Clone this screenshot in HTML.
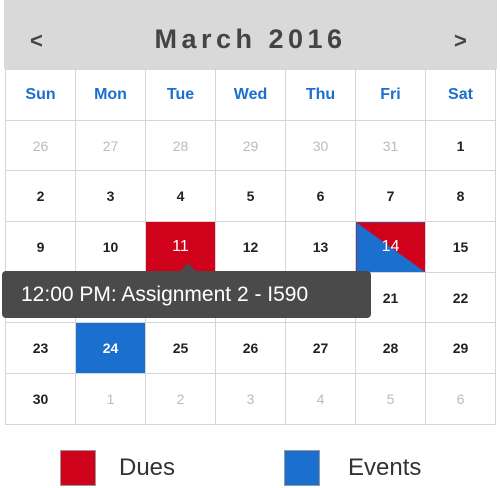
<!DOCTYPE html>
<html><head><style>
body{margin:0;width:500px;height:488px;background:#fff;font-family:"Liberation Sans",Arial,sans-serif;position:relative;overflow:hidden}
.hd{position:absolute;left:4px;top:0;width:493px;height:69px;background:#d9d9d9}
.hd .t{position:absolute;left:0;right:0;top:24px;text-align:center;font-size:27px;font-weight:bold;letter-spacing:4.5px;color:#444}
.hd .a{position:absolute;top:28px;font-size:22px;font-weight:bold;color:#444}
table{position:absolute;left:5px;top:69px;border-collapse:collapse}
td{width:69px;height:49.7px;border:1.5px solid #d6d6d6;text-align:center;font-size:14px;font-weight:bold;color:#222;padding:0;position:relative}
tr.w td{color:#1a6fcf;font-size:16px}
td.g{color:#bbb;font-weight:normal}
td.r{background:#d0021b;color:#fff;font-weight:normal;font-size:16px}
td.b{background:#1a6fcf;color:#fff}
td.d{background:linear-gradient(to top right,#1a6fcf 50%,#d0021b 50%);color:#fff;font-weight:normal;font-size:16px}
.tip{position:absolute;left:2px;top:271px;width:369px;height:47px;background:#4a4a4a;border-radius:4px;color:#fff;font-size:21px;line-height:47px;box-sizing:border-box;padding-left:19px}
.tip:before{content:"";position:absolute;left:178px;top:-8px;border-left:8px solid transparent;border-right:8px solid transparent;border-bottom:8px solid #4a4a4a}
.sq{position:absolute;top:450px;width:36px;height:36px;border:1px solid #999;box-sizing:border-box}
.lb{position:absolute;top:454px;font-size:24px;color:#333}
</style></head><body>
<div class="hd"><span class="a" style="left:26px">&lt;</span><div class="t">March 2016</div><span class="a" style="left:450px">&gt;</span></div>
<table>
<tr class="w"><td>Sun</td><td>Mon</td><td>Tue</td><td>Wed</td><td>Thu</td><td>Fri</td><td>Sat</td></tr>
<tr><td class="g">26</td><td class="g">27</td><td class="g">28</td><td class="g">29</td><td class="g">30</td><td class="g">31</td><td>1</td></tr>
<tr><td>2</td><td>3</td><td>4</td><td>5</td><td>6</td><td>7</td><td>8</td></tr>
<tr><td>9</td><td>10</td><td class="r">11</td><td>12</td><td>13</td><td class="d">14</td><td>15</td></tr>
<tr><td>16</td><td>17</td><td>18</td><td>19</td><td>20</td><td>21</td><td>22</td></tr>
<tr><td>23</td><td class="b">24</td><td>25</td><td>26</td><td>27</td><td>28</td><td>29</td></tr>
<tr><td>30</td><td class="g">1</td><td class="g">2</td><td class="g">3</td><td class="g">4</td><td class="g">5</td><td class="g">6</td></tr>
</table>
<div class="tip">12:00 PM: Assignment 2 - I590</div>
<div class="sq" style="left:60px;background:#d0021b"></div><div class="lb" style="left:119px">Dues</div>
<div class="sq" style="left:284px;background:#1a6fcf"></div><div class="lb" style="left:348px">Events</div>
</body></html>
